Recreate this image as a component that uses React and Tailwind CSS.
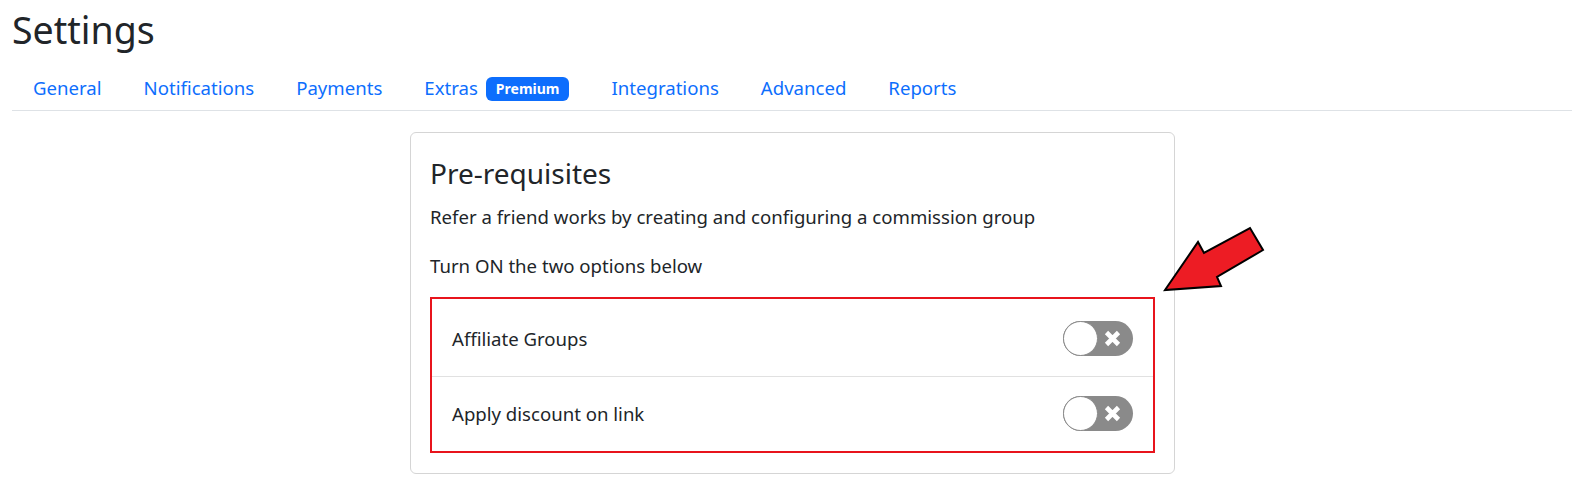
import React from "react";

function Toggle() {
  return (
    <div className="relative w-[70px] h-[35px] rounded-full bg-[#8a8a8a] shrink-0">
      <div className="absolute left-0 top-0 w-[35px] h-[35px] rounded-full bg-white border border-[#8a8a8a]" />
      <svg className="absolute left-[41px] top-[9px]" width="17" height="17" viewBox="0 0 17 17">
        <path d="M2.5 2.5 L14.5 14.5 M14.5 2.5 L2.5 14.5" stroke="#fff" strokeWidth="4.6" strokeLinecap="butt" />
      </svg>
    </div>
  );
}

export default function App() {
  const tabs = ["General", "Notifications", "Payments", "Extras", "Integrations", "Advanced", "Reports"];
  return (
    <div className="relative w-[1580px] h-[482px] bg-white text-[#212529] font-['Noto_Sans',sans-serif] overflow-hidden">
      <div className="pl-3 pr-2">
        <h1 className="text-[37.5px] leading-[1.2] pt-[7px] font-normal">Settings</h1>
        <nav className="flex mt-[13px] border-b border-[#dee2e6]">
          {tabs.map((t) => (
            <a key={t} className="flex items-center px-[21px] h-[45px] text-[18.6px] text-[#0d6efd]">
              {t}
              {t === "Extras" && (
                <span className="ml-[8px] rounded-[6px] bg-[#0d6efd] text-white text-[14px] font-bold px-[10px] h-[24px] mt-[2px] flex items-center">Premium</span>
              )}
            </a>
          ))}
        </nav>
        <div className="ml-[398px] mt-[21px] w-[765px] border border-[#d5d5d5] rounded-[6px] px-[19px] pt-[19px] pb-[20px]">
          <h2 className="text-[28px] leading-[1.2] font-normal mt-[5px]">Pre-requisites</h2>
          <p className="text-[18.6px] leading-[1.5] mt-[12px]">Refer a friend works by creating and configuring a commission group</p>
          <p className="text-[18.6px] leading-[1.5] mt-[22px]">Turn ON the two options below</p>
          <div className="mt-[17px] border-2 border-[#e8141c]">
            <div className="flex items-center justify-between px-5 pt-[22px] pb-[20px]">
              <span className="text-[18.6px]">Affiliate Groups</span>
              <Toggle />
            </div>
            <div className="flex items-center justify-between px-5 pt-[19px] pb-[20px] border-t border-[#e1e1e1]">
              <span className="text-[18.6px]">Apply discount on link</span>
              <Toggle />
            </div>
          </div>
        </div>
      </div>
      <svg className="absolute left-[1150px] top-[215px] pointer-events-none" width="125" height="90" viewBox="0 0 125 90">
        <polygon points="15,75 48,27 54,38 100,13 113,35 67,62 71,71" fill="#ed1c24" stroke="#000" strokeWidth="2" strokeLinejoin="miter" />
      </svg>
    </div>
  );
}
